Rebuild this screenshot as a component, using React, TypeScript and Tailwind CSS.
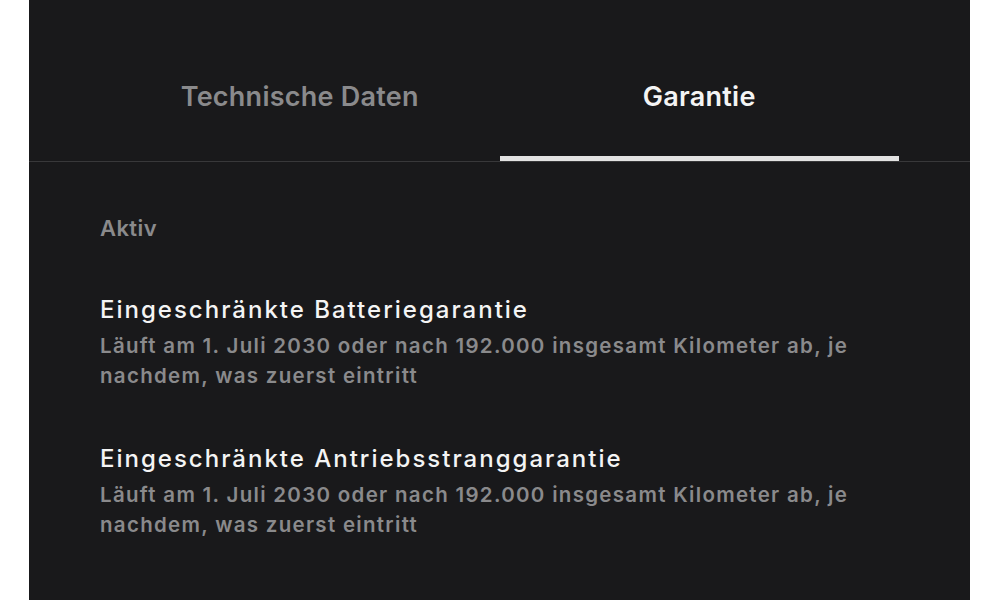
import React from 'react';

const items = [
  {
    title: 'Eingeschränkte Batteriegarantie',
    text: 'Läuft am 1. Juli 2030 oder nach 192.000 insgesamt Kilometer ab, je nachdem, was zuerst eintritt',
  },
  {
    title: 'Eingeschränkte Antriebsstranggarantie',
    text: 'Läuft am 1. Juli 2030 oder nach 192.000 insgesamt Kilometer ab, je nachdem, was zuerst eintritt',
  },
];

export default function App() {
  return (
    <div className="flex h-[600px] w-[1000px] bg-white" style={{ fontFamily: 'Inter, "Noto Sans", sans-serif' }}>
      {/* dark panel */}
      <div className="ml-[29px] mr-[30px] flex-1 overflow-hidden bg-[#19191b]">
        {/* tabs */}
        <div className="flex border-b border-[#38383a] px-[71px]">
          <button className="flex h-[161px] flex-1 justify-center border-b-[5px] border-transparent pt-[81px] text-[27px] font-semibold leading-[32px] tracking-[0.25px] text-[#8a8a8c]">
            Technische Daten
          </button>
          <button className="flex h-[161px] flex-1 justify-center border-b-[5px] border-[#e2e2e2] pt-[81px] text-[27px] font-semibold leading-[32px] tracking-[0.25px] text-[#f4f4f4]">
            Garantie
          </button>
        </div>

        {/* content */}
        <div className="pl-[71px] pr-[100px]">
          <div className="mt-[54px] text-[22px] font-semibold leading-[24px] tracking-[0.4px] text-[#8a8a8c]">Aktiv</div>
          {items.map((it, i) => (
            <div key={it.title} className={i === 0 ? 'mt-[54px]' : 'mt-[52px]'}>
              <div className="text-[24px] font-medium leading-[32px] tracking-[2px] text-[#f4f4f4]">{it.title}</div>
              <div className="mt-[5px] text-[20.5px] font-semibold leading-[30px] tracking-[1.3px] text-[#8a8a8c]">{it.text}</div>
            </div>
          ))}
        </div>
      </div>
    </div>
  );
}
